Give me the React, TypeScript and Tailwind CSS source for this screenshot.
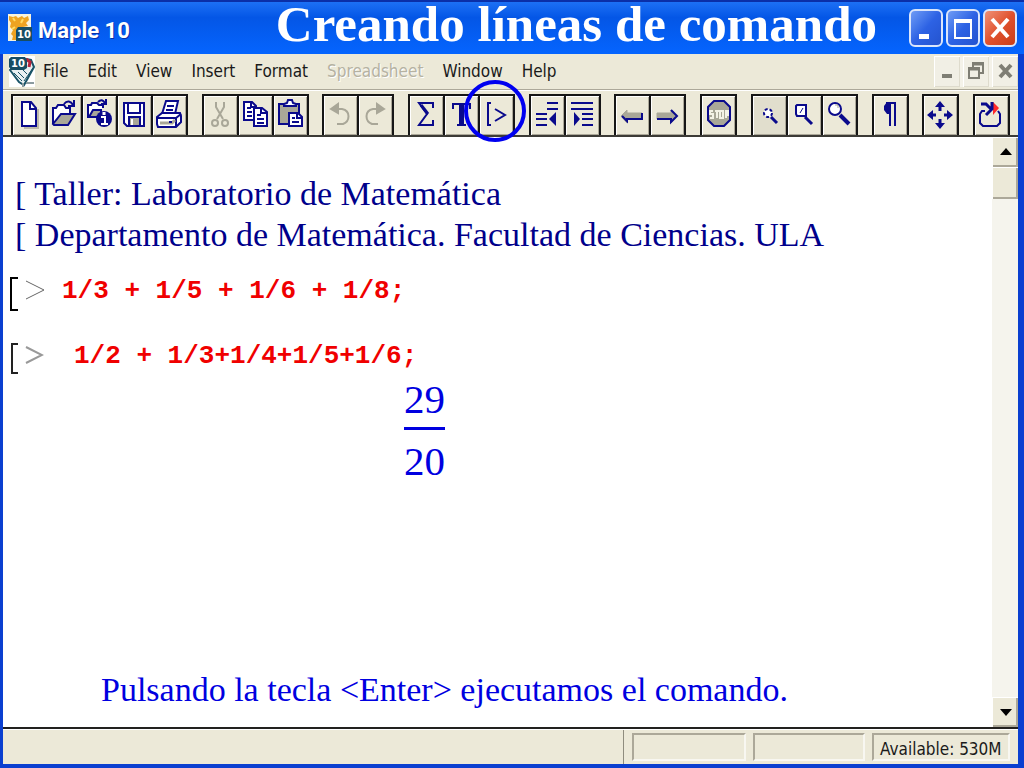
import type { ReactNode } from 'react';
import { clsx } from 'clsx';

const NAVY = '#0a0a8c';
const GRAY = '#a9a798';

const menus = ['File', 'Edit', 'View', 'Insert', 'Format', 'Spreadsheet', 'Window', 'Help'];

type Tool = {
  label: string;
  icon: ReactNode;
  disabled?: boolean;
  pressed?: boolean;
  marked?: boolean;
};

// every toolbar drawing uses a 34x38 box, the inside of one button
const toolGroups: Tool[][] = [
  [
    {
      label: 'New',
      icon: (
        <g>
          <path d="M12 31h14V12" stroke="#bdbaa9" />
          <path d="M10 5h9l5 6v18H10z" fill="#fff" />
          <path d="M18 5v7h6" />
        </g>
      ),
    },
    {
      label: 'Open',
      icon: (
        <g>
          <path d="M6 27V11h3l2-3h6l2 3h4v6" fill="#fff" />
          <path d="M6 27l8-10h14l-7 11H7z" fill={GRAY} />
          <path d="M17 7c3-4 7-3 9 1M27 3v6h-6" />
        </g>
      ),
    },
    {
      label: 'Properties',
      icon: (
        <g>
          <path d="M6 21V8h3l1-2h5l2 2h4v3" fill="#fff" />
          <path d="M7 20l4-7h8v7z" fill={GRAY} />
          <path d="M16 5c3-3 5-2 7 1M24 2v5h-5" />
          <circle cx="22" cy="22" r="8" fill={NAVY} stroke="none" />
          <path d="M22 15v3" stroke="#fff" strokeWidth="3" />
          <path d="M19 20h4v7M19 27h7" stroke="#fff" />
        </g>
      ),
    },
    {
      label: 'Save',
      icon: (
        <g>
          <path d="M7 6h20v23H10l-3-3z" fill="#fff" />
          <path d="M11 6h12v10H11z" />
          <path d="M12 29v-9h11v9z" fill={GRAY} />
          <path d="M15 22v6" stroke="#fff" />
        </g>
      ),
    },
    {
      label: 'Print',
      icon: (
        <g>
          <path d="M10 17l4-13h12l-3 13z" fill="#fff" />
          <path d="M15 9h7M14 13h7" />
          <path d="M5 20l5-4h18l1 3v6l-5 5H6l-1-3z" fill="#fff" />
          <path d="M5 21h19l5-4M24 21v9" />
          <path d="M8 26h12l3-3" stroke={GRAY} strokeWidth="3" />
          <path d="M17 25h3" />
        </g>
      ),
    },
  ],
  [
    {
      label: 'Cut',
      disabled: true,
      icon: (
        <g>
          <path d="M13 5v5l7 12M21 5v5l-7 12" />
          <circle cx="12" cy="26" r="3" />
          <circle cx="22" cy="26" r="3" />
        </g>
      ),
    },
    {
      label: 'Copy',
      icon: (
        <g>
          <path d="M6 5h8l4 4v14H6z" fill="#fff" />
          <path d="M13 5v5h4M9 11h4M9 15h5M9 19h5" />
          <path d="M16 11h8l5 4v14H16z" fill="#fff" />
          <path d="M23 11v5h5M19 18h4M19 22h7M19 26h7" />
        </g>
      ),
    },
    {
      label: 'Paste',
      icon: (
        <g>
          <path d="M6 7h20v20H6z" fill={GRAY} />
          <path d="M11 9V7l3-1 1-3h4l1 3 3 1v2z" fill="#fff" />
          <path d="M16 16h9l4 4v9H16z" fill="#fff" />
          <path d="M24 16v5h4M19 21h3M19 25h7" />
        </g>
      ),
    },
  ],
  [
    {
      label: 'Undo',
      disabled: true,
      icon: (
        <g>
          <path d="M10 12h9c9 2 8 12 1 15h-6" />
          <path d="M8 12l7-5v9z" fill={GRAY} />
        </g>
      ),
    },
    {
      label: 'Redo',
      disabled: true,
      icon: (
        <g>
          <path d="M24 12h-9c-9 2-8 12-1 15h6" />
          <path d="M26 12l-7-5v9z" fill={GRAY} />
        </g>
      ),
    },
  ],
  [
    {
      label: 'Sigma',
      icon: (
        <g>
          <path d="M24 11V6H10l8 11-8 11h14v-5" />
          <path d="M12 8l7 9" strokeWidth="3" />
        </g>
      ),
    },
    {
      label: 'Text',
      icon: (
        <g>
          <path d="M9 12V7h17v5M13 28h9" />
          <path d="M17.5 6v22" strokeWidth="5" />
        </g>
      ),
    },
    {
      label: 'Insert command line',
      marked: true,
      icon: (
        <g>
          <path d="M12 6H9v22h3" />
          <path d="M16 12l10 6-10 6" />
        </g>
      ),
    },
  ],
  [
    {
      label: 'Outdent',
      icon: (
        <g>
          <path d="M17 6h11M17 12h11M6 17h11M6 22h11M6 28h11" />
          <path d="M19 22l7-7v14z" fill={NAVY} stroke="none" />
        </g>
      ),
    },
    {
      label: 'Indent',
      icon: (
        <g>
          <path d="M6 6h22M6 12h22M17 17h11M17 22h11M17 28h11" />
          <path d="M15 22l-6-7v14z" fill={NAVY} stroke="none" />
        </g>
      ),
    },
  ],
  [
    {
      label: 'Back',
      icon: (
        <g>
          <path d="M6 19l6-6v3h15v6H12v4z" fill={GRAY} stroke={GRAY} strokeWidth="1" />
          <path d="M7 19l5 5v-2h15v-6" />
        </g>
      ),
    },
    {
      label: 'Forward',
      icon: (
        <g>
          <path d="M27 19l-6-6v3H7v6h14v4z" fill={GRAY} stroke={GRAY} strokeWidth="1" />
          <path d="M21 13l6 6-6 6v-3H7" />
        </g>
      ),
    },
  ],
  [
    {
      label: 'Stop',
      icon: (
        <g>
          <path d="M13 4h10l6 6v13l-6 6H13l-6-6V10z" fill={GRAY} />
          <path
            d="M12 14H9v3h3v4H9M14 14h4M16 14v7M19 14h3v7h-3zM25 21v-7h2v4h-2"
            stroke="#f4f2e6"
            strokeWidth="2"
          />
        </g>
      ),
    },
  ],
  [
    {
      label: 'Zoom 100%',
      pressed: true,
      icon: (
        <g>
          <circle cx="16" cy="16" r="4" fill="#fff" strokeDasharray="3 2" />
          <path d="M19 20l6 6" strokeWidth="3" />
        </g>
      ),
    },
    {
      label: 'Zoom 150%',
      icon: (
        <g>
          <path d="M10 8h9v11h-9l-1-2V9z" fill="#fff" />
          <path d="M16 11l-3 5" strokeWidth="1" />
          <path d="M18 20l7 7" strokeWidth="3" />
        </g>
      ),
    },
    {
      label: 'Zoom 200%',
      icon: (
        <g>
          <circle cx="13" cy="12" r="6" fill="#fff" />
          <path d="M13 8h3v3" stroke={GRAY} strokeWidth="1" />
          <path d="M18 18l9 9" strokeWidth="4" />
        </g>
      ),
    },
  ],
  [
    {
      label: 'Show invisible characters',
      icon: (
        <g>
          <path d="M13 6h10M17 6v23M22 6v23" />
          <path d="M17 5h-3l-3 4v4l3 4h3z" fill={NAVY} stroke="none" />
        </g>
      ),
    },
  ],
  [
    {
      label: 'Resize to page',
      icon: (
        <g>
          <path d="M17 7v7M17 22v7M8 18h5M21 18h6" strokeWidth="3" />
          <path
            d="M17 4l5 6H12zM17 32l5-6H12zM4 18l6-5v10zM30 18l-6-5v10z"
            fill={NAVY}
            stroke="none"
          />
        </g>
      ),
    },
  ],
  [
    {
      label: 'Restart',
      icon: (
        <g>
          <path d="M11 14H8l-2 3v9l3 3h14l3-3v-9l-2-3" />
          <path d="M19 5l6 6-6 7z" fill="#ff2a2a" stroke="none" />
          <path d="M7 7h5l5 5M12 18l6-6V5" strokeWidth="3" />
        </g>
      ),
    },
  ],
];

function ToolButton({ tool }: { tool: Tool }) {
  return (
    <button
      type="button"
      aria-label={tool.label}
      disabled={tool.disabled}
      className={clsx(
        'relative h-[39px] w-[35px] border-r-2 border-[#161616] shadow-[inset_1px_1px_0_#fff,inset_-1px_-1px_0_#aca899]',
        tool.pressed ? 'bg-[#e1decd]' : 'bg-[#ece9d8]'
      )}
    >
      <svg
        viewBox="1 0 34 38"
        className="h-[38px] w-[34px]"
        fill="none"
        stroke={tool.disabled ? GRAY : NAVY}
        strokeWidth="2"
      >
        {tool.icon}
      </svg>
      {tool.marked && (
        <span className="pointer-events-none absolute -top-4 -left-4 z-10 size-[62px] rounded-full border-4 border-[#0000f0]" />
      )}
    </button>
  );
}

function AppIcon() {
  return (
    <svg viewBox="0 0 24 28" className="h-7 w-6">
      <path d="M0 0h23v27H0z" fill="#f8f3dc" />
      <path d="M1 2l4 1 3-1 2 2 4-2 2 2 4-2 1 4-3 3 2 3-5 1-3 4-3 1v8H4l1-4-2-2 2-4-3-3 1-4-2-3z" fill="#eda321" />
      <path d="M5 4l2 3M15 5l-2 4M7 13l-3 2" stroke="#ffda61" strokeWidth="2" />
      <path d="M10 13h14v14H8V16z" fill="#174d63" />
      <text x="9" y="24" fontSize="10" fontWeight="700" fontFamily="DejaVu Sans" fill="#fff">
        10
      </text>
    </svg>
  );
}

function DocumentIcon() {
  return (
    <svg viewBox="0 0 26 31" className="h-[31px] w-[26px]">
      <path d="M0 0h26v31H0z" fill="#fff" />
      <path d="M17 3l5 1 3 7-10 18-5-3L1 14z" fill="#e8f0f2" stroke="#195468" strokeWidth="2" />
      <path d="M5 17l8 8M9 16l6 6M14 14l4 4M24 12l-9 13" stroke="#195468" />
      <path d="M17 3l4 3-1 5" fill="none" stroke="#b5233a" strokeWidth="3" />
      <path d="M14 31v-4M17 27h8" stroke="#8b9b9f" strokeWidth="2" />
      <path d="M2 1h14l2 3v8l-3 2H2l-2-3V3z" fill="#174d63" />
      <text x="2" y="11" fontSize="10" fontWeight="700" fontFamily="DejaVu Sans" fill="#fff">
        10
      </text>
    </svg>
  );
}

const captionButtons = [
  { label: 'Minimize', color: 'from-[#6f9bf5] via-[#2d62e4] to-[#2453cf]', path: <path d="M9 25h10v5H9z" fill="#fff" /> },
  {
    label: 'Maximize',
    color: 'from-[#6f9bf5] via-[#2d62e4] to-[#2453cf]',
    path: (
      <g stroke="#fff">
        <path d="M8 11h16v18H8z" fill="none" strokeWidth="2" />
        <path d="M7 12h18" strokeWidth="4" />
      </g>
    ),
  },
  {
    label: 'Close',
    color: 'from-[#ef9075] via-[#e0512d] to-[#c93d18]',
    path: <path d="M8 10l16 18M24 10L8 28" stroke="#fff" strokeWidth="4" />,
  },
];

const documentButtons = [
  { label: 'Minimize document', path: <path d="M8 20h10" strokeWidth="4" /> },
  {
    label: 'Restore document',
    path: (
      <g strokeWidth="2">
        <path d="M6 12h10v10H6zM10 11V7h10v10h-3" />
        <path d="M6 13h10M10 8h10" strokeWidth="3" />
      </g>
    ),
  },
  { label: 'Close document', path: <path d="M8 9l11 12M19 9L8 21" strokeWidth="4" /> },
];

function TitleBar() {
  return (
    <header className="flex h-[54px] items-center border-t-2 border-[#0a2fa8] bg-linear-to-b from-[#1c70f5] via-[#0456e6] via-30% to-[#0565ff] pr-[7px] pl-2">
      <AppIcon />
      <span className="ml-1.5 pt-1 font-['Roboto',sans-serif] text-[22px] font-bold whitespace-nowrap text-white [text-shadow:1px_1px_#0a2fa8]">
        Maple 10
      </span>
      <h1 className="mr-8 mb-2 ml-auto font-['Liberation_Serif',serif] text-[51px] leading-[46px] font-bold whitespace-nowrap text-white">
        Creando líneas de comando
      </h1>
      <div className="flex gap-[3px]">
        {captionButtons.map((button) => (
          <button
            key={button.label}
            type="button"
            aria-label={button.label}
            className={clsx('h-[38px] w-[34px] rounded-md border-2 border-[#dbe6fb] bg-linear-to-br', button.color)}
          >
            <svg viewBox="1 2 30 34" className="h-[34px] w-[30px]">
              {button.path}
            </svg>
          </button>
        ))}
      </div>
    </header>
  );
}

function MenuBar() {
  return (
    <nav className="flex h-9 items-center border-b border-[#aca899] pl-1.5">
      <DocumentIcon />
      <div className="ml-2 flex gap-[19px]">
        {menus.map((menu) => (
          <button
            key={menu}
            type="button"
            disabled={menu === 'Spreadsheet'}
            className="font-['DejaVu_Sans_Condensed','Roboto',sans-serif] text-[17px] text-[#1a1a1a] disabled:text-[#b5b2a2] disabled:[text-shadow:1px_1px_#fff]"
          >
            {menu}
          </button>
        ))}
      </div>
      <div className="ml-auto flex gap-[3px] bg-[#f4f2e9]">
        {documentButtons.map((button) => (
          <button
            key={button.label}
            type="button"
            aria-label={button.label}
            className="bg-[#f1efe5] shadow-[inset_1px_1px_#fff,inset_-1px_-1px_#dedbcd]"
          >
            <svg viewBox="0 0 26 31" className="h-[31px] w-[26px]" fill="none" stroke="#7f7e74">
              {button.path}
            </svg>
          </button>
        ))}
      </div>
    </nav>
  );
}

function Toolbar() {
  return (
    <div role="toolbar" className="flex items-end justify-between border-t border-b-2 border-t-white border-b-[#3c3b36] px-2 pt-[3px]">
      {toolGroups.map((group) => (
        <div key={group[0].label} className="flex border-t-2 border-l-2 border-[#161616]">
          {group.map((tool) => (
            <ToolButton key={tool.label} tool={tool} />
          ))}
        </div>
      ))}
    </div>
  );
}

function Prompt({ small = false }: { small?: boolean }) {
  return (
    <svg viewBox="0 0 40 36" className="h-9 w-10 shrink-0" fill="none">
      {small ? (
        <g>
          <path d="M14 3H8v29h6" stroke="#222" strokeWidth="2" />
          <path d="M22 6l16 8-16 8" stroke="#999" strokeWidth="2" />
        </g>
      ) : (
        <g>
          <path d="M14 2H7v32h7" stroke="#000" strokeWidth="2" />
          <path d="M22 5l18 9-18 9" stroke="#666" />
        </g>
      )}
    </svg>
  );
}

function Worksheet() {
  return (
    <main className="flex min-w-0 flex-1 flex-col bg-white pl-px font-['Liberation_Serif',serif]">
      <div className="pt-9 pl-[11px] text-[34px] leading-[41px] text-[#00008b]">
        <p>[ Taller: Laboratorio de Matemática</p>
        <p>[ Departamento de Matemática. Facultad de Ciencias. ULA</p>
      </div>
      <div className="mt-[21px] flex font-['Liberation_Mono',monospace] text-[26px] leading-[30px] font-bold text-[#f00000]">
        <Prompt />
        <code className="ml-[18px] font-[inherit]">1/3 + 1/5 + 1/6 + 1/8;</code>
      </div>
      <div className="mt-[29px] flex font-['Liberation_Mono',monospace] text-[26px] leading-[30px] font-bold text-[#f00000]">
        <Prompt small />
        <code className="ml-[30px] font-[inherit]">1/2 + 1/3+1/4+1/5+1/6;</code>
      </div>
      <div className="ml-[400px] flex w-[41px] flex-col text-center text-[41px] leading-[44px] text-[#0000e0]">
        <span className="border-b-[3px] border-[#0000e0] pb-1.5">29</span>
        <span className="pt-[9px]">20</span>
      </div>
      <p className="mt-auto pb-[17px] pl-[97px] text-[34px] leading-[41px] text-[#0000e0]">
        Pulsando la tecla &lt;Enter&gt; ejecutamos el comando.
      </p>
    </main>
  );
}

function ScrollBar() {
  const raised = 'bg-[#ece9d8] shadow-[inset_1px_1px_#fff,inset_-2px_-2px_#aca899]';
  return (
    <div className="flex w-[26px] flex-col bg-[#f5f4ed]">
      <button type="button" aria-label="Scroll up" className={clsx('h-[30px]', raised)}>
        <svg viewBox="0 0 26 30" className="h-[30px] w-[26px]">
          <path d="M14 11l6 7H8z" />
        </svg>
      </button>
      <div className={clsx('h-8', raised)} />
      <button type="button" aria-label="Scroll down" className={clsx('mt-auto h-[30px]', raised)}>
        <svg viewBox="0 0 26 30" className="h-[30px] w-[26px]">
          <path d="M14 19l6-7H8z" />
        </svg>
      </button>
    </div>
  );
}

function StatusBar() {
  const panel = 'h-7 border-2 border-t-[#aca899] border-l-[#aca899] border-r-[#f8f7f1] border-b-[#f8f7f1]';
  return (
    <footer className="flex h-[35px] items-center justify-end border-t border-white pr-2">
      <div className="mr-2 h-full w-px bg-[#8f8c7e]" />
      <div className="flex gap-[7px]">
        <div className={clsx('w-[114px]', panel)} />
        <div className={clsx('w-[112px]', panel)} />
        <div
          className={clsx(
            "w-[138px] pl-1.5 font-['DejaVu_Sans_Condensed','Roboto',sans-serif] text-[17px] leading-7 whitespace-nowrap text-[#1a1a1a]",
            panel
          )}
        >
          Available: 530M
        </div>
      </div>
    </footer>
  );
}

export default function App() {
  return (
    <div className="flex h-screen flex-col bg-[#0a45d6]">
      <TitleBar />
      <div className="flex min-h-0 flex-1 flex-col border-r-[6px] border-b-4 border-l-[3px] border-[#0a3fd0] bg-[#ece9d8]">
        <MenuBar />
        <Toolbar />
        <div className="flex min-h-0 flex-1 border-b-2 border-[#22211f]">
          <Worksheet />
          <ScrollBar />
        </div>
        <StatusBar />
      </div>
    </div>
  );
}
